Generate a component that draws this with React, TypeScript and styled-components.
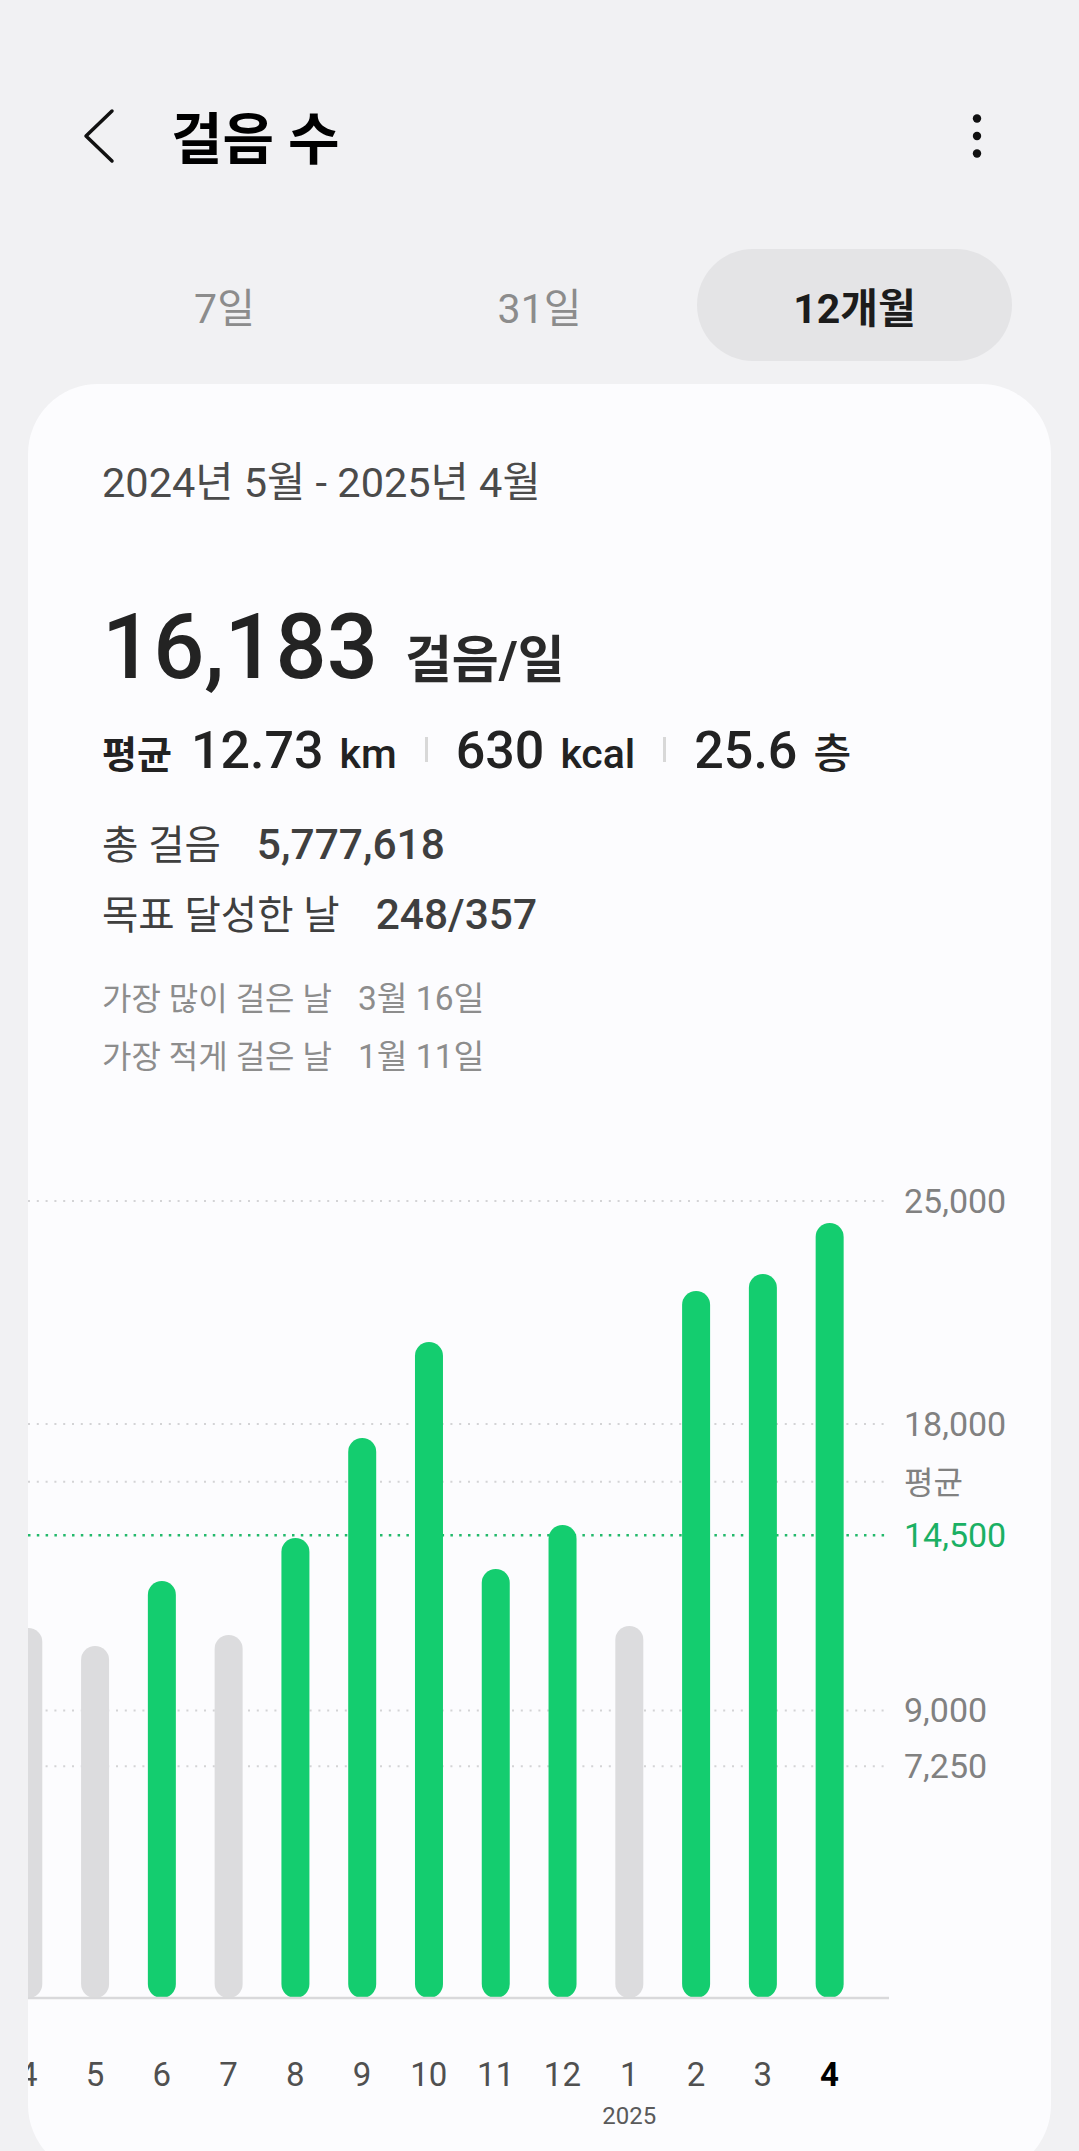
import React from "react";
import styled, { createGlobalStyle } from "styled-components";

const GlobalStyle = createGlobalStyle`
  * { box-sizing: border-box; }
  body {
    margin: 0;
    background: #f1f1f3;
    font-family: Roboto, "Noto Sans CJK KR", sans-serif;
  }
`;

// chart scale: baseline y and px per step
const BASE_Y = 828;
const PX_PER_STEP = 0.03184;
const SLOT = 66.78;
const yOf = (v: number) => BASE_Y - v * PX_PER_STEP;

const months = [
  { m: "4", v: 11589, goal: false },
  { m: "5", v: 11024, goal: false },
  { m: "6", v: 13065, goal: true },
  { m: "7", v: 11369, goal: false },
  { m: "8", v: 14416, goal: true },
  { m: "9", v: 17557, goal: true },
  { m: "10", v: 20571, goal: true },
  { m: "11", v: 13442, goal: true },
  { m: "12", v: 14824, goal: true },
  { m: "1", v: 11652, goal: false, year: "2025" },
  { m: "2", v: 22173, goal: true },
  { m: "3", v: 22707, goal: true },
  { m: "4", v: 24309, goal: true, current: true },
];

const gridLines = [
  { v: 25000, label: "25,000", kind: "grid" },
  { v: 18000, label: "18,000", kind: "grid" },
  { v: 16183, label: "평균", kind: "avg" },
  { v: 14500, label: "14,500", kind: "target" },
  { v: 9000, label: "9,000", kind: "grid" },
  { v: 7250, label: "7,250", kind: "grid" },
];

const Page = styled.div`
  width: 1079px;
  height: 2151px;
  overflow: hidden;
  display: flex;
  flex-direction: column;
  background: #f1f1f3;
`;

const Header = styled.header`
  display: flex;
  align-items: center;
  height: 112px;
  margin-top: 84px;
  padding: 0 92px 0 83px;
  flex-shrink: 0;
`;

const BackIcon = styled.svg`
  width: 32px;
  height: 56px;
  margin-bottom: 8px;
  flex-shrink: 0;
`;

const Title = styled.h1`
  margin: 0 0 0 56px;
  font-size: 56px;
  line-height: 60px;
  font-weight: 700;
  color: #000;
  flex: 1;
`;

const MoreIcon = styled.svg`
  width: 20px;
  height: 48px;
  margin-bottom: 9px;
`;

const Tabs = styled.div`
  display: grid;
  grid-template-columns: repeat(3, 315px);
  margin: 53px 0 0 67px;
  flex-shrink: 0;
`;

const Tab = styled.div<{ $active?: boolean }>`
  height: 112px;
  border-radius: 56px;
  display: flex;
  align-items: center;
  justify-content: center;
  font-size: 41px;
  background: ${(p) => (p.$active ? "#e4e4e6" : "transparent")};
  color: ${(p) => (p.$active ? "#1c1c1c" : "#8c8c8c")};
  font-weight: ${(p) => (p.$active ? 700 : 400)};
`;

const Card = styled.section`
  margin: 23px 28px 0;
  height: 1791px;
  flex-shrink: 0;
  background: #fcfcfe;
  border-radius: 70px;
  overflow: hidden;
  padding-top: 75px;
`;

const Summary = styled.div`
  padding-left: 74px;
`;

const DateRange = styled.div`
  font-size: 41.5px;
  line-height: 48px;
  color: #4b4b4b;
`;

const Headline = styled.div`
  display: flex;
  align-items: baseline;
  margin-top: 91px;
  color: #232323;
`;

const BigNumber = styled.span`
  font-size: 90px;
  line-height: 100px;
  font-weight: 500;
`;

const BigUnit = styled.span`
  font-size: 51px;
  line-height: 54px;
  font-weight: 700;
  margin-left: 27px;
  color: #2a2a2a;
`;

const AvgRow = styled.div`
  display: flex;
  align-items: baseline;
  height: 60px;
  margin-top: 23px;
  color: #222;
`;

const AvgLabel = styled.span`
  font-size: 38px;
  line-height: 44px;
  font-weight: 700;
  margin-right: 19px;
`;

const AvgValue = styled.span`
  font-size: 52px;
  line-height: 60px;
  font-weight: 500;
`;

const AvgUnit = styled.span`
  font-size: 41px;
  line-height: 48px;
  font-weight: 500;
  margin-left: 16px;
`;

const Divider = styled.span`
  width: 3px;
  height: 25px;
  background: #d8d8d8;
  align-self: flex-end;
  margin: 0 28px 19px 28px;
`;

const StatRow = styled.div<{ $gap: number }>`
  display: flex;
  align-items: baseline;
  margin-top: ${(p) => p.$gap}px;
  color: #3f3f3f;
`;

const StatLabel = styled.span`
  font-size: 39.5px;
  line-height: 50px;
`;

const StatValue = styled.span`
  font-size: 42.5px;
  line-height: 50px;
  font-weight: 500;
  margin-left: 36px;
`;

const MinorRow = styled.div<{ $gap: number }>`
  margin-top: ${(p) => p.$gap}px;
  font-size: 32px;
  line-height: 40px;
  color: #8d8d8d;
`;

const MinorValue = styled.span`
  margin-left: 26px;
  font-size: 33.5px;
`;

const ChartSvg = styled.svg`
  display: block;
  margin-top: 92px;
`;

const AxisText = styled.text<{ $tone: string }>`
  font-family: Roboto, "Noto Sans CJK KR", sans-serif;
  font-size: ${(p) => (p.$tone === "avg" ? 32 : 34)}px;
  fill: ${(p) => (p.$tone === "target" ? "#1bb064" : "#818181")};
`;

const MonthRow = styled.div`
  display: flex;
  margin: 46px 0 0 -33.1px;
`;

const MonthSlot = styled.div`
  width: ${SLOT}px;
  flex-shrink: 0;
  display: flex;
  flex-direction: column;
  align-items: center;
`;

const MonthLabel = styled.span<{ $current?: boolean }>`
  font-size: 33px;
  line-height: 40px;
  color: ${(p) => (p.$current ? "#000" : "#505050")};
  font-weight: ${(p) => (p.$current ? 700 : 400)};
`;

const YearLabel = styled.span`
  margin-top: 6px;
  font-size: 24px;
  line-height: 30px;
  color: #5a5a5a;
`;

const StepChart = () => (
  <ChartSvg width={1023} height={840} viewBox="0 0 1023 840">
    {gridLines.map((g) => {
      const y = yOf(g.v);
      const target = g.kind === "target";
      return (
        <g key={g.label}>
          <line
            x1={0}
            x2={861}
            y1={y}
            y2={y}
            stroke={target ? "#22b96b" : "#d3d3d5"}
            strokeWidth={target ? 2.5 : 2}
            strokeDasharray={target ? "2.5 6.3" : "2 6.8"}
          />
          <AxisText $tone={g.kind} x={876} y={y + 12}>
            {g.label}
          </AxisText>
        </g>
      );
    })}
    {months.map((d, i) => {
      const cx = 0.3 + i * SLOT;
      const top = yOf(d.v);
      return (
        <rect
          key={i}
          x={cx - 14}
          y={top}
          width={28}
          height={BASE_Y + 1 - top}
          rx={14}
          fill={d.goal ? "#14cd6f" : "#dcdcde"}
        />
      );
    })}
    <line x1={0} x2={861} y1={BASE_Y + 1} y2={BASE_Y + 1} stroke="#d9d9db" strokeWidth={2.5} />
  </ChartSvg>
);

export default function App() {
  return (
    <Page>
      <GlobalStyle />
      <Header>
        <BackIcon viewBox="0 0 32 56">
          <polyline
            points="29,3 3,28 29,53"
            fill="none"
            stroke="#111"
            strokeWidth={3.5}
            strokeLinecap="round"
            strokeLinejoin="round"
          />
        </BackIcon>
        <Title>걸음 수</Title>
        <MoreIcon viewBox="0 0 20 48">
          <circle cx={10} cy={6.5} r={4.2} fill="#111" />
          <circle cx={10} cy={24} r={4.2} fill="#111" />
          <circle cx={10} cy={41.5} r={4.2} fill="#111" />
        </MoreIcon>
      </Header>

      <Tabs>
        <Tab>7일</Tab>
        <Tab>31일</Tab>
        <Tab $active>12개월</Tab>
      </Tabs>

      <Card>
        <Summary>
          <DateRange>2024년 5월 - 2025년 4월</DateRange>
          <Headline>
            <BigNumber>16,183</BigNumber>
            <BigUnit>걸음/일</BigUnit>
          </Headline>
          <AvgRow>
            <AvgLabel>평균</AvgLabel>
            <AvgValue>12.73</AvgValue>
            <AvgUnit>km</AvgUnit>
            <Divider />
            <AvgValue>630</AvgValue>
            <AvgUnit>kcal</AvgUnit>
            <Divider />
            <AvgValue>25.6</AvgValue>
            <AvgUnit>층</AvgUnit>
          </AvgRow>
          <StatRow $gap={39}>
            <StatLabel>총 걸음</StatLabel>
            <StatValue>5,777,618</StatValue>
          </StatRow>
          <StatRow $gap={19}>
            <StatLabel>목표 달성한 날</StatLabel>
            <StatValue>248/357</StatValue>
          </StatRow>
          <MinorRow $gap={38}>
            가장 많이 걸은 날<MinorValue>3월 16일</MinorValue>
          </MinorRow>
          <MinorRow $gap={18}>
            가장 적게 걸은 날<MinorValue>1월 11일</MinorValue>
          </MinorRow>
        </Summary>

        <StepChart />

        <MonthRow>
          {months.map((d, i) => (
            <MonthSlot key={i}>
              <MonthLabel $current={d.current}>{d.m}</MonthLabel>
              {d.year && <YearLabel>{d.year}</YearLabel>}
            </MonthSlot>
          ))}
        </MonthRow>
      </Card>
    </Page>
  );
}
